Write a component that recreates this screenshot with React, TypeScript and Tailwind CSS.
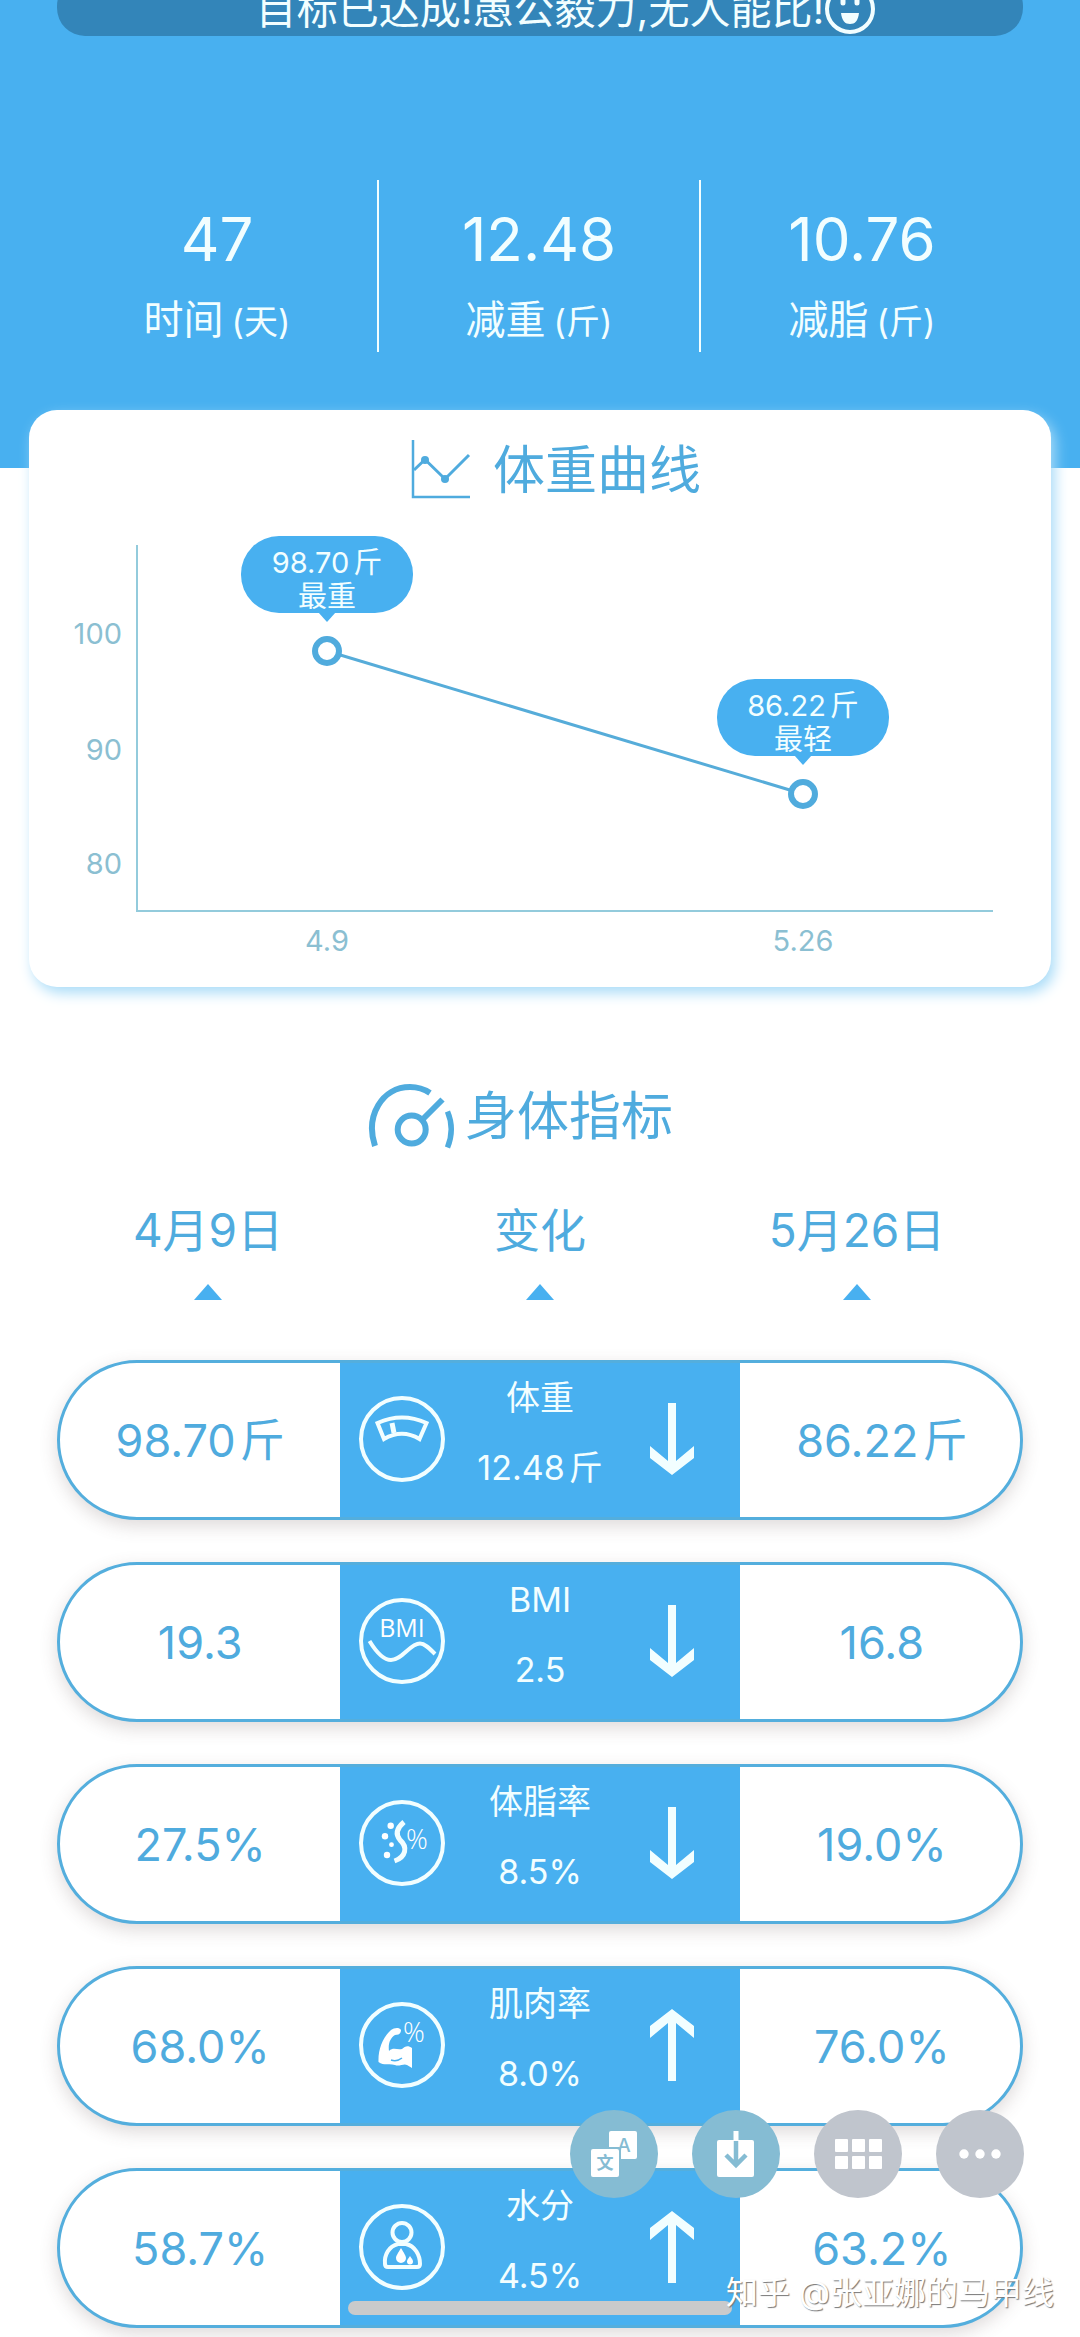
import type { ReactNode } from "react";

const stats = [
  { value: "47", label: "时间", unit: "(天)" },
  { value: "12.48", label: "减重", unit: "(斤)" },
  { value: "10.76", label: "减脂", unit: "(斤)" },
];

const points = [
  { x: 298, y: 241, value: "98.70", tag: "最重", date: "4.9" },
  { x: 774, y: 384, value: "86.22", tag: "最轻", date: "5.26" },
];

const ticks = [
  { y: 223, label: "100" },
  { y: 339, label: "90" },
  { y: 453, label: "80" },
];

function ScaleIcon() {
  return (
    <>
      <path d="M19.5 28Q44 17 68.500 28L61.500 44Q44 33.500 26 44Z" />
      <path d="M34 28L36 38" strokeWidth="5" />
    </>
  );
}

function BmiIcon() {
  return (
    <>
      <text x="44" y="40" fontSize="25" textAnchor="middle" fill="#fff" stroke="none" className="font-[Open_Sans,sans-serif]">
        BMI
      </text>
      <path d="M11.500 44C20 58 27 63 33 63C44 63 52 46.500 62 46.500C67 46.500 72 52 77 57" />
    </>
  );
}

function FatIcon() {
  return (
    <>
      <g fill="#fff" stroke="none">
        <circle cx="32.700" cy="26.700" r="3.200" />
        <circle cx="27" cy="37.300" r="3.200" />
        <circle cx="33.500" cy="45.700" r="2.400" />
        <circle cx="29" cy="56" r="3.200" />
        <text x="59" y="50" fontSize="27" textAnchor="middle" className="font-[Open_Sans,sans-serif] font-light">
          %
        </text>
      </g>
      <path d="M46 23C39 29 37 35 42 41C50 48 48 58 36.500 62" strokeWidth="5" />
    </>
  );
}

function MuscleIcon() {
  return (
    <g fill="#fff" stroke="none">
      <path d="M43 29C41 26 36 27 33 29C25 36 20 48 20.500 61C26 65 31 62 37 64C41 66 46 62 49 64L54 67V47C50 44 47 45 44 48C39 49 35 46 31 50C30 43 32 37 37 34C40 34 43 33 43 29Z" />
      <path d="M33 59Q39 61 44 57" fill="none" stroke="#48b0f0" strokeWidth="1.500" />
      <text x="56" y="41" fontSize="27" textAnchor="middle" className="font-[Open_Sans,sans-serif] font-light">
        %
      </text>
    </g>
  );
}

function WaterIcon() {
  return (
    <>
      <circle cx="44" cy="29.500" r="9.500" />
      <path d="M40 41C31 43 26 52 27 61Q27 64 30 64H59Q62 64 62 61C62 52 57 43 48 41Z" />
      <g fill="#fff" stroke="none">
        <path d="M43 45C40 50 38 53 38 55A5 5 0 0 0 48 55C48 53 46 50 43 45Z" />
        <path d="M52 53C50 56 49 57 49 58.500A3 3 0 0 0 55 58.500C55 57 54 56 52 53Z" />
      </g>
    </>
  );
}

const rows: { name: string; before: string; change: string; after: string; unit?: string; up?: boolean; icon: ReactNode }[] = [
  { name: "体重", before: "98.70", change: "12.48", after: "86.22", unit: "斤", icon: <ScaleIcon /> },
  { name: "BMI", before: "19.3", change: "2.5", after: "16.8", icon: <BmiIcon /> },
  { name: "体脂率", before: "27.5%", change: "8.5%", after: "19.0%", icon: <FatIcon /> },
  { name: "肌肉率", before: "68.0%", change: "8.0%", after: "76.0%", up: true, icon: <MuscleIcon /> },
  { name: "水分", before: "58.7%", change: "4.5%", after: "63.2%", up: true, icon: <WaterIcon /> },
];

function WeightChart() {
  return (
    <svg viewBox="0 0 1022 577" className="block w-full" role="img" aria-label="体重曲线">
      <path d="M108 135V501H964" fill="none" stroke="#93cbdc" strokeWidth="2" />
      <g fill="#8bbfd2" fontSize="29">
        {ticks.map((t) => (
          <text key={t.label} x="93" y={t.y + 11} textAnchor="end">{t.label}</text>
        ))}
        {points.map((p) => (
          <text key={p.date} x={p.x} y="541" textAnchor="middle">{p.date}</text>
        ))}
      </g>
      <path d="M298 241L774 384" stroke="#56acd9" strokeWidth="3" />
      {points.map((p) => (
        <g key={p.date}>
          <circle cx={p.x} cy={p.y} r="12" fill="#fff" stroke="#50abdd" strokeWidth="6" />
          <rect x={p.x - 86} y={p.y - 115} width="172" height="77" rx="38" fill="#48b0f0" />
          <path d={`M${p.x - 9} ${p.y - 39}h18l-9 10z`} fill="#48b0f0" />
          <g fill="#f2feff" fontSize="29" textAnchor="middle">
            <text x={p.x} y={p.y - 78}>
              {p.value}
              <tspan dx="4">斤</tspan>
            </text>
            <text x={p.x} y={p.y - 44}>{p.tag}</text>
          </g>
        </g>
      ))}
    </svg>
  );
}

function Value({ value, unit }: { value: string; unit?: string }) {
  return (
    <span className="flex items-center gap-1 whitespace-nowrap">
      {value}
      {unit && <span>{unit}</span>}
    </span>
  );
}

function ToolButton({ label, tone, children }: { label: string; tone: string; children: ReactNode }) {
  return (
    <button type="button" aria-label={label} className={`size-[88px] rounded-full ${tone}`}>
      <svg viewBox="0 0 88 88" className="size-full" fill="#fff">
        {children}
      </svg>
    </button>
  );
}

export default function App() {
  return (
    <div className="relative min-h-screen overflow-hidden bg-white pb-[9px] font-[Inter,'Noto_Sans_CJK_SC',sans-serif]">
      <header className="flow-root h-[468px] bg-[#48b0f0] px-[57px] text-[#f2feff]">
        <div className="-mt-[22px] mb-36 flex h-[58px] items-center justify-center rounded-[28px] bg-[#3385b9] pt-1 pl-[52px] text-[41px] leading-none">
          <span className="whitespace-nowrap">目标已达成!愚公毅力,无人能比!</span>
          <svg viewBox="0 0 52 52" className="size-[52px] shrink-0" fill="none" stroke="currentColor" strokeWidth="4">
            <circle cx="26" cy="26" r="23" />
            <path d="M17 30H35C34 38 31 41 26 41S18 38 17 30Z" fill="currentColor" stroke="none" />
            <path d="M19 17V20M33 17V20" strokeWidth="5" strokeLinecap="round" />
          </svg>
        </div>
        <dl className="grid grid-cols-3 divide-x-2 divide-[#f2feff]">
          {stats.map((s) => (
            <div key={s.label} className="flex h-[172px] flex-col-reverse items-center justify-end pt-6">
              <dt className="mt-[18px] flex items-baseline gap-2 text-[40px] leading-[56px]">
                {s.label}
                <span className="text-[34px]">{s.unit}</span>
              </dt>
              <dd className="text-[60px] leading-[70px]">{s.value}</dd>
            </div>
          ))}
        </dl>
      </header>

      <section className="mx-[29px] -mt-[58px] grid rounded-[28px] bg-white shadow-[4px_6px_14px_#a9dcf8]">
        <div className="col-start-1 row-start-1">
          <WeightChart />
        </div>
        <h2 className="col-start-1 row-start-1 flex items-start justify-center gap-[22px] pt-[27px] pl-8 text-[52px] leading-[68px] text-[#4fabde]">
          <svg viewBox="0 0 60 60" className="mt-[2px] size-[60px]" fill="none" stroke="currentColor" strokeWidth="2.500">
            <path d="M2 1V58H59" />
            <path d="M3 31L14 20.500L34 40L58 16" strokeWidth="3" />
            <g fill="currentColor" stroke="none">
              <circle cx="14" cy="21" r="4" />
              <circle cx="34" cy="40" r="4" />
            </g>
          </svg>
          体重曲线
        </h2>
      </section>

      <section className="mt-[82px]">
        <h2 className="flex items-center justify-center gap-[10px] pr-10 text-[52px] leading-[96px] text-[#4fabde]">
          <svg viewBox="0 0 88 66" className="h-[66px] w-[88px]" fill="none" stroke="currentColor" strokeWidth="6">
            <path d="M8 62C-2 32 15 3 43 3Q54 3 63 9" />
            <circle cx="44.700" cy="45.500" r="14" />
            <path d="M75.500 15.500L55.500 35.500" />
            <path d="M80.500 27.500Q88 45 80.500 63.500" strokeWidth="5.500" />
          </svg>
          身体指标
        </h2>

        <table className="block text-[#4fabde]">
          <thead className="block">
            <tr className="grid h-[195px] grid-cols-[11fr_11fr_10fr] pt-8 pr-[72px] pl-[42px] text-[46px] leading-[66px]">
              {["4月9日", "变化", "5月26日"].map((h) => (
                <th key={h} scope="col" className="flex flex-col items-center gap-[21px] font-normal">
                  {h}
                  <svg viewBox="0 0 28 16" className="h-4 w-7" fill="#48b0f0">
                    <path d="M14 0L28 16H0Z" />
                  </svg>
                </th>
              ))}
            </tr>
          </thead>
          <tbody className="flex flex-col gap-[42px] px-[57px]">
            {rows.map((r) => (
              <tr
                key={r.name}
                className="grid h-[160px] grid-cols-[280fr_399fr_280fr] overflow-hidden rounded-full border-3 border-[#54aedd] bg-white text-[45px] shadow-[0_6px_18px_rgba(90,70,70,0.2)]"
              >
                <td className="flex items-center justify-center">
                  <Value value={r.before} unit={r.unit} />
                </td>
                <td className="grid grid-cols-[132px_1fr_132px] items-center bg-[#48b0f0] pb-1 text-[#f2feff]">
                  <svg viewBox="0 0 88 88" className="ml-[18px] size-[88px]" fill="none" stroke="#f2feff" strokeWidth="4">
                    <circle cx="44" cy="44" r="41" />
                    {r.icon}
                  </svg>
                  <div className="flex flex-col items-center pb-3 text-[34px] leading-[70px]">
                    <span>{r.name}</span>
                    <Value value={r.change} unit={r.unit} />
                  </div>
                  <svg viewBox="0 0 44 72" className="ml-[42px] h-[72px] w-11" fill="#f2feff">
                    {r.up ? (
                      <path d="M22 0L44 17V29L26 14V72H18V14L0 29V17Z" />
                    ) : (
                      <path d="M22 72L44 55V43L26 58V0H18V58L0 43V55Z" />
                    )}
                  </svg>
                </td>
                <td className="flex items-center justify-center pl-1">
                  <Value value={r.after} unit={r.unit} />
                </td>
              </tr>
            ))}
          </tbody>
        </table>
      </section>

      {/* floating tools */}
      <div className="absolute right-[56px] bottom-[139px] flex gap-[34px]">
        <ToolButton label="翻译" tone="bg-[#85bcd3]">
          <rect x="39" y="21" width="28" height="28" rx="2" />
          <text x="54" y="42" fontSize="19" textAnchor="middle" fill="#85bcd3" className="font-medium">A</text>
          <rect x="19" y="37" width="32" height="32" rx="2" fill="#85bcd3" />
          <rect x="21" y="39" width="28" height="28" rx="2" />
          <text x="35" y="59" fontSize="17" textAnchor="middle" fill="#85bcd3" className="font-bold">文</text>
        </ToolButton>
        <ToolButton label="下载" tone="bg-[#85bcd3]">
          <rect x="25" y="30" width="37" height="37" rx="2" />
          <rect x="41.500" y="21" width="5" height="10" />
          <path d="M44 31V55M34 45L44 55L54 45" fill="none" stroke="#85bcd3" strokeWidth="4.500" />
        </ToolButton>
        <ToolButton label="宫格" tone="bg-[#c0c5cd]">
          {[21, 38, 55].map((x) => (
            <g key={x}>
              <rect x={x} y="29" width="13" height="13" rx="1" />
              <rect x={x} y="46" width="13" height="13" rx="1" />
            </g>
          ))}
        </ToolButton>
        <ToolButton label="更多" tone="bg-[#c0c5cd]">
          <circle cx="28" cy="44" r="4.700" />
          <circle cx="44" cy="44" r="4.700" />
          <circle cx="60" cy="44" r="4.700" />
        </ToolButton>
      </div>

      <div className="absolute bottom-[22px] left-1/2 h-[14px] w-96 -translate-x-1/2 rounded-full bg-[#c9cacb]" />
      <p className="absolute right-[26px] bottom-[24px] text-[32px] leading-10 whitespace-nowrap text-white [text-shadow:1px_1px_1px_#777]">
        知乎 @张亚娜的马甲线
      </p>
    </div>
  );
}
